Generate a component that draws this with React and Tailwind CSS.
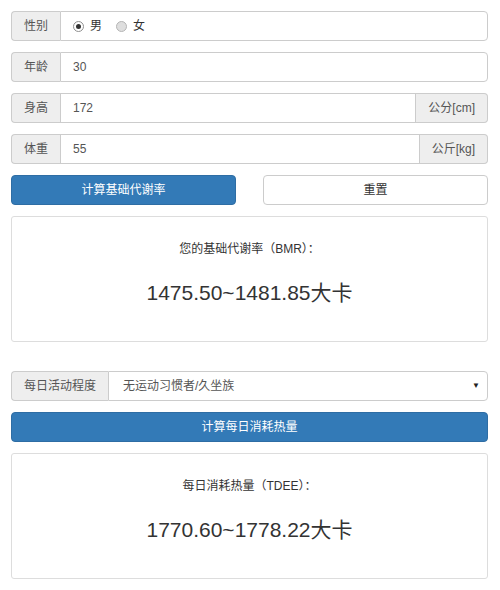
import React, { useState } from 'react';

const FONT = { fontFamily: '"Liberation Sans", Arial, "Noto Sans CJK SC", sans-serif' };

const Addon = ({ children, side = 'left' }) => (
  <span
    className={`flex items-center px-3 bg-[#eeeeee] border border-[#cccccc] text-[#555555] whitespace-nowrap ${
      side === 'left' ? 'rounded-l-[4px] border-r-0' : 'rounded-r-[4px] border-l-0'
    }`}
  >
    {children}
  </span>
);

const Radio = ({ checked, label, onClick }) => (
  <label className="flex items-center gap-[6px] cursor-pointer" onClick={onClick}>
    <span
      className={`flex items-center justify-center w-[11px] h-[11px] rounded-full border ${
        checked ? 'border-[#8f8f8f] bg-white' : 'border-[#b5b5b5] bg-[#dedede]'
      }`}
    >
      {checked && <span className="w-[5px] h-[5px] rounded-full bg-[#333333]" />}
    </span>
    <span className="text-[#333333]">{label}</span>
  </label>
);

const ResultBox = ({ title, value }) => (
  <div className="h-[126px] border border-[#dddddd] rounded-[3px] flex flex-col items-center pt-[24px]">
    <div className="text-[#333333] leading-[17px]">{title}</div>
    <div className="text-[21px] text-[#333333] leading-[24px] mt-[23px]">{value}</div>
  </div>
);

export default function App() {
  const [male, setMale] = useState(true);

  return (
    <div className="w-[500px] h-[590px] bg-white text-[12px] px-[11px] pt-[11px] overflow-hidden" style={FONT}>
      <div className="w-[477px]">
        {/* 性别 */}
        <div className="flex h-[30px]">
          <Addon>性别</Addon>
          <div className="flex-1 flex items-center gap-[14px] pl-[12px] border border-[#cccccc] rounded-r-[4px]">
            <Radio checked={male} label="男" onClick={() => setMale(true)} />
            <Radio checked={!male} label="女" onClick={() => setMale(false)} />
          </div>
        </div>

        {/* 年龄 */}
        <div className="flex h-[30px] mt-[11px]">
          <Addon>年龄</Addon>
          <input
            defaultValue="30"
            className="flex-1 min-w-0 px-[12px] border border-[#cccccc] rounded-r-[4px] text-[#555555] outline-none"
          />
        </div>

        {/* 身高 */}
        <div className="flex h-[30px] mt-[11px]">
          <Addon>身高</Addon>
          <input
            defaultValue="172"
            className="flex-1 min-w-0 px-[12px] border border-[#cccccc] text-[#555555] outline-none"
          />
          <Addon side="right">公分[cm]</Addon>
        </div>

        {/* 体重 */}
        <div className="flex h-[30px] mt-[11px]">
          <Addon>体重</Addon>
          <input
            defaultValue="55"
            className="flex-1 min-w-0 px-[12px] border border-[#cccccc] text-[#555555] outline-none"
          />
          <Addon side="right">公斤[kg]</Addon>
        </div>

        {/* buttons */}
        <div className="grid grid-cols-2 gap-[27px] mt-[11px]">
          <button className="h-[30px] bg-[#337ab7] border border-[#2e6da4] rounded-[4px] text-white">
            计算基础代谢率
          </button>
          <button className="h-[30px] bg-white border border-[#cccccc] rounded-[4px] text-[#333333]">
            重置
          </button>
        </div>

        <div className="mt-[11px]">
          <ResultBox title="您的基础代谢率（BMR）：" value="1475.50~1481.85大卡" />
        </div>

        {/* 活动程度 */}
        <div className="flex h-[30px] mt-[29px]">
          <Addon>每日活动程度</Addon>
          <div className="flex-1 flex items-center justify-between pl-[14px] pr-[7px] border border-[#cccccc] rounded-r-[4px] text-[#555555]">
            <span>无运动习惯者/久坐族</span>
            <span className="text-[8px] text-[#222222]">▼</span>
          </div>
        </div>

        <button className="w-full h-[30px] mt-[11px] bg-[#337ab7] border border-[#2e6da4] rounded-[4px] text-white">
          计算每日消耗热量
        </button>

        <div className="mt-[11px]">
          <ResultBox title="每日消耗热量（TDEE）：" value="1770.60~1778.22大卡" />
        </div>
      </div>
    </div>
  );
}
